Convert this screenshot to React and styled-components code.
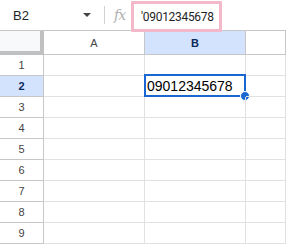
import styled, { createGlobalStyle } from "styled-components";

const Global = createGlobalStyle`
  body {
    margin: 0;
    background: #fff;
    font-family: Arial, "Liberation Sans", sans-serif;
  }
`;

const Page = styled.div`
  width: 286px;
  height: 244px;
  overflow: hidden;
  background: #fff;
`;

const TopBar = styled.div`
  height: 30px;
  display: flex;
  align-items: center;
  border-bottom: 1px solid #c7c7c7;
  position: relative;
`;

const NameBox = styled.div`
  width: 78px;
  padding-left: 13px;
  font-size: 13px;
  color: #1f1f1f;
  display: flex;
  align-items: center;
  justify-content: space-between;
`;

const Caret = styled.span`
  width: 0;
  height: 0;
  border-left: 4px solid transparent;
  border-right: 4px solid transparent;
  border-top: 4px solid #444;
`;

const Divider = styled.div`
  width: 1px;
  height: 18px;
  background: #d0d0d0;
  margin-left: 13px;
`;

const Fx = styled.span`
  font-family: "DejaVu Serif", serif;
  font-style: italic;
  font-size: 14px;
  color: #b0b0b0;
  margin-left: 9px;
  letter-spacing: -1px;
`;

const Formula = styled.div`
  position: absolute;
  left: 131px;
  top: 1px;
  width: 91px;
  height: 31px;
  box-sizing: border-box;
  border: 3px solid #f4b8cb;
  border-radius: 1px;
  font-family: Roboto, "Liberation Sans", sans-serif;
  font-size: 12px;
  letter-spacing: -0.3px;
  color: #1f1f1f;
  display: flex;
  align-items: center;
  padding-left: 7px;
  background: #fff;
  white-space: nowrap;
`;

const Grid = styled.div`
  display: grid;
  grid-template-columns: 44px 101px 101px 1fr;
  grid-template-rows: 24px repeat(9, 21px);
`;

const Corner = styled.div`
  background: #f8f9fa;
  border-right: 4px solid #c0c0c0;
  border-bottom: 4px solid #c0c0c0;
  box-sizing: border-box;
  height: 24px;
`;

const ColHead = styled.div`
  box-sizing: border-box;
  border-right: 1px solid #c7c7c7;
  border-bottom: 1px solid #c7c7c7;
  background: ${(p) => (p.$active ? "#d3e3fd" : "#fff")};
  color: ${(p) => (p.$active ? "#0b2a5c" : "#444")};
  font-size: 11px;
  font-weight: ${(p) => (p.$active ? 600 : 400)};
  display: flex;
  align-items: center;
  justify-content: center;
`;

const RowHead = styled.div`
  box-sizing: border-box;
  border-right: 1px solid #c7c7c7;
  border-bottom: 1px solid #c7c7c7;
  background: ${(p) => (p.$active ? "#d3e3fd" : "#fff")};
  color: ${(p) => (p.$active ? "#0b2a5c" : "#444")};
  font-weight: ${(p) => (p.$active ? 700 : 400)};
  font-size: 11px;
  display: flex;
  align-items: center;
  justify-content: center;
`;

const Cell = styled.div`
  box-sizing: border-box;
  border-right: 1px solid #e1e1e1;
  border-bottom: 1px solid #e1e1e1;
  position: relative;
  font-size: 14px;
  color: #000;
  display: flex;
  align-items: center;
  padding-left: 2px;
`;

const Selection = styled.div`
  position: absolute;
  left: -1px;
  top: -2px;
  right: -1px;
  bottom: -1px;
  border: 2px solid #1a67d2;
  pointer-events: none;
`;

const Handle = styled.div`
  position: absolute;
  right: -6px;
  bottom: -6px;
  width: 8px;
  height: 8px;
  border-radius: 50%;
  background: #1a67d2;
  border: 1px solid #fff;
`;

const rows = [1, 2, 3, 4, 5, 6, 7, 8, 9];

export default function App() {
  return (
    <Page>
      <Global />
      <TopBar>
        <NameBox>
          B2
          <Caret />
        </NameBox>
        <Divider />
        <Fx>fx</Fx>
        <Formula>'09012345678</Formula>
      </TopBar>
      <Grid>
        <Corner />
        <ColHead>A</ColHead>
        <ColHead $active>B</ColHead>
        <ColHead />
        {rows.map((r) => (
          <>
            <RowHead key={"h" + r} $active={r === 2}>
              {r}
            </RowHead>
            <Cell key={"a" + r} />
            <Cell key={"b" + r}>
              {r === 2 && (
                <>
                  09012345678
                  <Selection>
                    <Handle />
                  </Selection>
                </>
              )}
            </Cell>
            <Cell key={"c" + r} />
          </>
        ))}
      </Grid>
    </Page>
  );
}
